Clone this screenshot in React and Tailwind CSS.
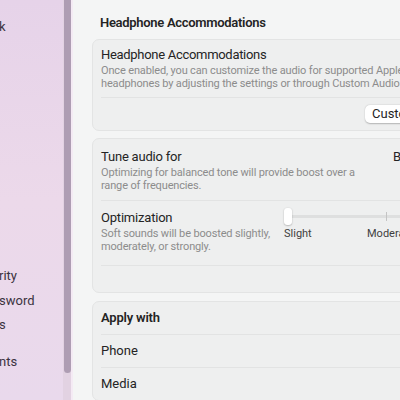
import React from 'react';

function Divider() {
  return <div className="h-px bg-[#e2e3e3]" />;
}

function Sidebar() {
  const items = [
    { label: 'k', top: 'mt-[20px]' },
    { label: 'rity', top: 'mt-[235px]' },
    { label: 'sword', top: 'mt-[11px]' },
    { label: 's', top: 'mt-[10px]' },
    { label: 'nts', top: 'mt-[23px]' },
  ];
  return (
    <div className="relative w-[73px] h-full shrink-0 bg-gradient-to-b from-[#e6d3e9] via-[#ecd9ea] to-[#e9d9ec]">
      <div className="flex flex-col text-[13px] text-[#3b3340] leading-[14px]">
        {items.map((it, i) => (
          <div key={i} className={`${it.top} -ml-[1px] h-[14px]`}>{it.label}</div>
        ))}
      </div>
      <div className="absolute right-[2px] top-0 w-[8px] h-full bg-[#e2d2e2]">
        <div className="mx-auto mt-[-6px] w-[7px] h-[379px] rounded-full bg-[#ae9db3]" />
      </div>
      <div className="absolute right-0 top-0 w-[2px] h-full bg-[#f4eaf4]" />
    </div>
  );
}

export default function App() {
  return (
    <div className="w-[400px] h-[400px] overflow-hidden flex bg-[#f4f5f5] font-['Roboto',sans-serif] antialiased">
      <Sidebar />
      <div className="flex-1 min-w-0 pl-[19px]">
        <div className="w-[340px]">
          <h1 className="pt-[15px] pl-[8px] text-[13px] tracking-[-0.3px] font-semibold text-[#242424] leading-[16px]">
            Headphone Accommodations
          </h1>

          <div className="mt-[8px] rounded-[7px] bg-[#eeefef] border border-[#e3e4e4] px-[8px]">
            <div className="pt-[7px] pb-[7px]">
              <div className="text-[13px] tracking-[-0.3px] text-[#242424] leading-[16px]">Headphone Accommodations</div>
              <div className="mt-[1px] text-[11px] tracking-[-0.15px] text-[#8c8c8c] leading-[13px] whitespace-nowrap">
                Once enabled, you can customize the audio for supported Apple
                <br />
                headphones by adjusting the settings or through Custom Audio Setup.
              </div>
            </div>
            <Divider />
            <div className="flex h-[32px] items-center">
              <div className="ml-[264px] px-[7px] h-[18px] rounded-[5px] bg-white shadow-[0_0.5px_1.5px_rgba(0,0,0,0.25)] text-[13px] leading-[18px] text-[#242424] whitespace-nowrap">
                Customize…
              </div>
            </div>
          </div>

          <div className="mt-[7px] rounded-[7px] bg-[#eeefef] border border-[#e3e4e4] px-[8px] h-[155px]">
            <div className="pt-[10px] pb-[8px] flex">
              <div className="w-[292px] shrink-0">
                <div className="text-[13px] tracking-[-0.2px] text-[#242424] leading-[16px]">Tune audio for</div>
                <div className="mt-[1px] text-[11px] tracking-[-0.15px] text-[#8c8c8c] leading-[13px] whitespace-nowrap">
                  Optimizing for balanced tone will provide boost over a
                  <br />
                  range of frequencies.
                </div>
              </div>
              <div className="text-[13px] text-[#242424] leading-[16px] whitespace-nowrap">Balanced</div>
            </div>
            <Divider />
            <div className="pt-[9px] pb-[12px] flex">
              <div className="w-[183px] shrink-0">
                <div className="text-[13px] tracking-[-0.2px] text-[#242424] leading-[16px]">Optimization</div>
                <div className="mt-[1px] text-[11px] tracking-[-0.15px] text-[#8c8c8c] leading-[13px] whitespace-nowrap">
                  Soft sounds will be boosted slightly,
                  <br />
                  moderately, or strongly.
                </div>
              </div>
              <div className="flex-1 min-w-0">
                <div className="relative h-[17px] mt-[-2px]">
                  <div className="absolute left-[4px] right-[-60px] top-[7px] h-[3px] rounded-full bg-[#dedfdf]" />
                  <div className="absolute left-[102px] top-[4px] w-px h-[9px] bg-[#c4c4c4]" />
                  <div className="absolute left-0 top-0 w-[8px] h-[17px] rounded-[3px] bg-white shadow-[0_0.5px_1.5px_rgba(0,0,0,0.35)]" />
                </div>
                <div className="mt-[2px] flex text-[11px] text-[#3e3e3e] leading-[13px] whitespace-nowrap">
                  <span className="w-[83px]">Slight</span>
                  <span>Moderate</span>
                </div>
              </div>
            </div>
            <Divider />
          </div>

          <div className="mt-[8px] rounded-[7px] bg-[#eeefef] border border-[#e3e4e4] px-[8px]">
            <div className="h-[32px] flex items-center text-[13px] tracking-[-0.2px] font-semibold text-[#242424]">Apply with</div>
            <Divider />
            <div className="h-[32px] flex items-center text-[13px] text-[#242424]">Phone</div>
            <Divider />
            <div className="h-[32px] flex items-center text-[13px] text-[#242424]">Media</div>
          </div>
        </div>
      </div>
    </div>
  );
}
